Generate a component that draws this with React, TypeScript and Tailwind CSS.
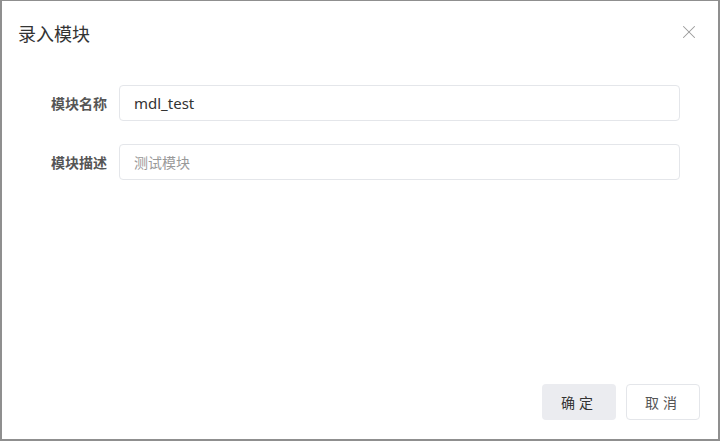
import { X } from "lucide-react";

const font = { fontFamily: '"Noto Sans", "Noto Sans CJK SC", sans-serif' };

export default function App() {
  return (
    <div
      className="w-[720px] h-[441px] bg-white border-l-2 border-t border-r-2 border-b-2 border-[#8f8f8f] flex flex-col"
      style={font}
    >
      {/* header */}
      <div className="flex items-center justify-between pl-[16px] pr-[18px] pt-[18px] h-[48px]">
        <h2 className="text-[18px] leading-[28px] text-[#333]">录入模块</h2>
        <X size={22} strokeWidth={1.1} className="text-[#9a9a9a] -mt-[4px]" />
      </div>

      {/* form */}
      <div className="flex flex-col gap-[23px] pt-[36px] pl-[49px] pr-[38px]">
        <div className="flex items-center gap-[12px]">
          <label className="w-[56px] text-[14px] font-bold text-[#555]">模块名称</label>
          <div className="flex-1 h-[36px] rounded-[4px] border border-[#e4e6ea] flex items-center px-[14px] text-[15px] text-[#333]">
            mdl_test
          </div>
        </div>
        <div className="flex items-center gap-[12px]">
          <label className="w-[56px] text-[14px] font-bold text-[#555]">模块描述</label>
          <div className="flex-1 h-[36px] rounded-[4px] border border-[#e4e6ea] flex items-center px-[14px] text-[14px] text-[#999]">
            测试模块
          </div>
        </div>
      </div>

      <div className="flex-1" />

      {/* footer */}
      <div className="flex justify-end gap-[10px] pr-[18px] pb-[19px]">
        <button className="w-[74px] h-[36px] rounded-[4px] bg-[#ebecf0] text-[14px] text-[#333] tracking-[4px]">
          确定
        </button>
        <button className="w-[74px] h-[36px] rounded-[4px] border border-[#e4e6ea] bg-white text-[14px] text-[#555] tracking-[4px]">
          取消
        </button>
      </div>
    </div>
  );
}
